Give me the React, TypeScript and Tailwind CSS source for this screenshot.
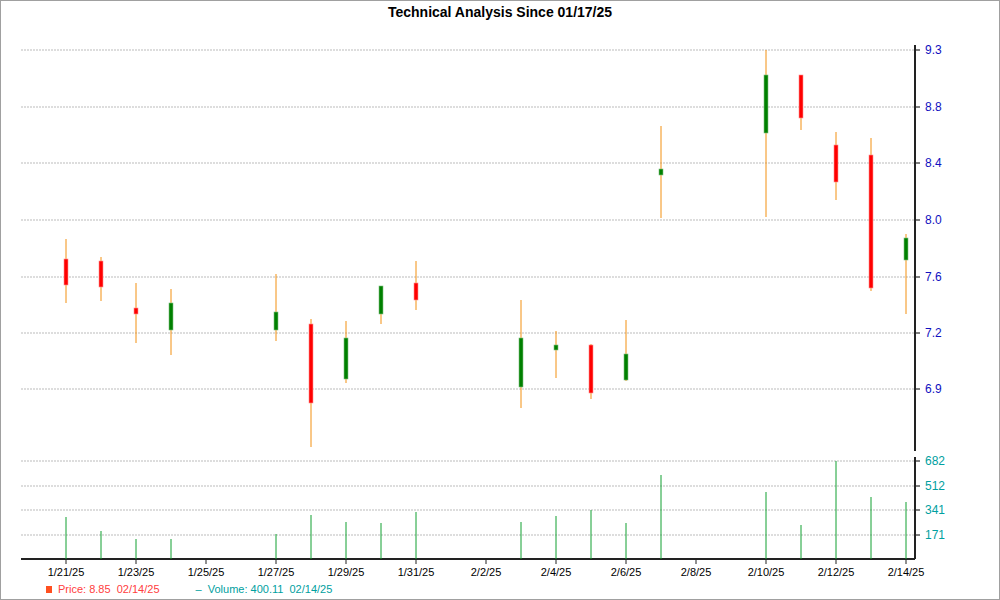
const candles: [number, number, number, number, number, boolean][] = [
  [65, 238, 302, 258, 284, false],
  [100, 256, 300, 260, 286, false],
  [135, 282, 342, 307, 313, false],
  [170, 288, 354, 302, 329, true],
  [275, 273, 340, 311, 329, true],
  [310, 318, 446, 323, 402, false],
  [345, 320, 382, 337, 378, true],
  [380, 285, 323, 285, 313, true],
  [415, 260, 309, 282, 299, false],
  [520, 299, 407, 337, 386, true],
  [555, 330, 377, 344, 349, true],
  [590, 343, 398, 344, 392, false],
  [625, 319, 380, 353, 379, true],
  [660, 125, 217, 168, 174, true],
  [765, 49, 216, 74, 132, true],
  [800, 74, 129, 74, 117, false],
  [835, 131, 199, 144, 181, false],
  [870, 137, 290, 154, 287, false],
  [905, 233, 313, 237, 259, true],
]

const volumes: [number, number][] = [
  [65, 516], [100, 530], [135, 538], [170, 538], [275, 533], [310, 514], [345, 521],
  [380, 522], [415, 511], [520, 521], [555, 515], [590, 509], [625, 522], [660, 474],
  [765, 491], [800, 524], [835, 460], [870, 496], [905, 501],
]

const priceGrid: [number, string][] = [[49, '9.3'], [106, '8.8'], [162, '8.4'], [219, '8.0'], [276, '7.6'], [332, '7.2'], [388, '6.9']]
const volGrid: [number, string][] = [[460, '682'], [485, '512'], [509, '341'], [534, '171']]
const dates = ['1/21/25', '1/23/25', '1/25/25', '1/27/25', '1/29/25', '1/31/25', '2/2/25', '2/4/25', '2/6/25', '2/8/25', '2/10/25', '2/12/25', '2/14/25']

const FONT = "'Liberation Sans', Arial, sans-serif"

export default function App() {
  return (
    <div className="relative w-[1000px] h-[600px] bg-white border border-[#a0a0a0] overflow-hidden" style={{ fontFamily: FONT }}>
      <div className="h-[22px] pt-[1px] text-center text-[14px] font-bold text-black">Technical Analysis Since 01/17/25</div>
      <svg className="absolute left-0 top-0" width="1000" height="600" fontFamily={FONT}>
        {priceGrid.map(([y, l]) => (
          <g key={l}>
            <line x1="20" x2="914" y1={y} y2={y} stroke="#bbb" strokeDasharray="2 1" />
            <line x1="914" x2="919" y1={y} y2={y} stroke="#000" />
            <text x="924" y={y + 4} fontSize="12" fill="#1010c0">{l}</text>
          </g>
        ))}
        {volGrid.map(([y, l]) => (
          <g key={l}>
            <line x1="20" x2="914" y1={y} y2={y} stroke="#bbb" strokeDasharray="2 1" />
            <line x1="914" x2="919" y1={y} y2={y} stroke="#000" />
            <text x="924" y={y + 4} fontSize="12" fill="#00a0a0">{l}</text>
          </g>
        ))}
        <line x1="914" x2="914" y1="44" y2="450" stroke="#222" strokeWidth="2" />
        <line x1="914" x2="914" y1="456" y2="558" stroke="#222" strokeWidth="2" />
        <line x1="20" x2="914" y1="558" y2="558" stroke="#222" strokeWidth="2" />
        {volumes.map(([x, y]) => (
          <line key={x} x1={x} x2={x} y1={y} y2="558" stroke="#10a030" />
        ))}
        {dates.map((d, i) => (
          <g key={d}>
            <line x1={65 + i * 70} x2={65 + i * 70} y1="558" y2="563" stroke="#222" />
            <text x={65 + i * 70} y="575" fontSize="11" textAnchor="middle" fill="#000">{d}</text>
          </g>
        ))}
        {candles.map(([x, hi, lo, t, b, up]) => (
          <g key={x}>
            <line x1={x} x2={x} y1={hi} y2={lo} stroke="#f39010" />
            <rect x={x - 2} y={t} width="4" height={Math.max(b - t, 4)} fill={up ? '#008000' : '#ff0000'} stroke={up ? '#7fbf7f' : '#ff9090'} strokeWidth="0.6" />
          </g>
        ))}
      </svg>
      <div className="absolute left-[45px] top-[580px] flex items-center gap-[6px] text-[11px]">
        <span className="w-[6px] h-[7px] bg-[#ff5020]" />
        <span className="text-[#ff4040] mr-[30px]">Price: 8.85&nbsp; 02/14/25</span>
        <span className="text-[#00a0a0]">–&nbsp;&nbsp;Volume: 400.11&nbsp; 02/14/25</span>
      </div>
    </div>
  )
}
